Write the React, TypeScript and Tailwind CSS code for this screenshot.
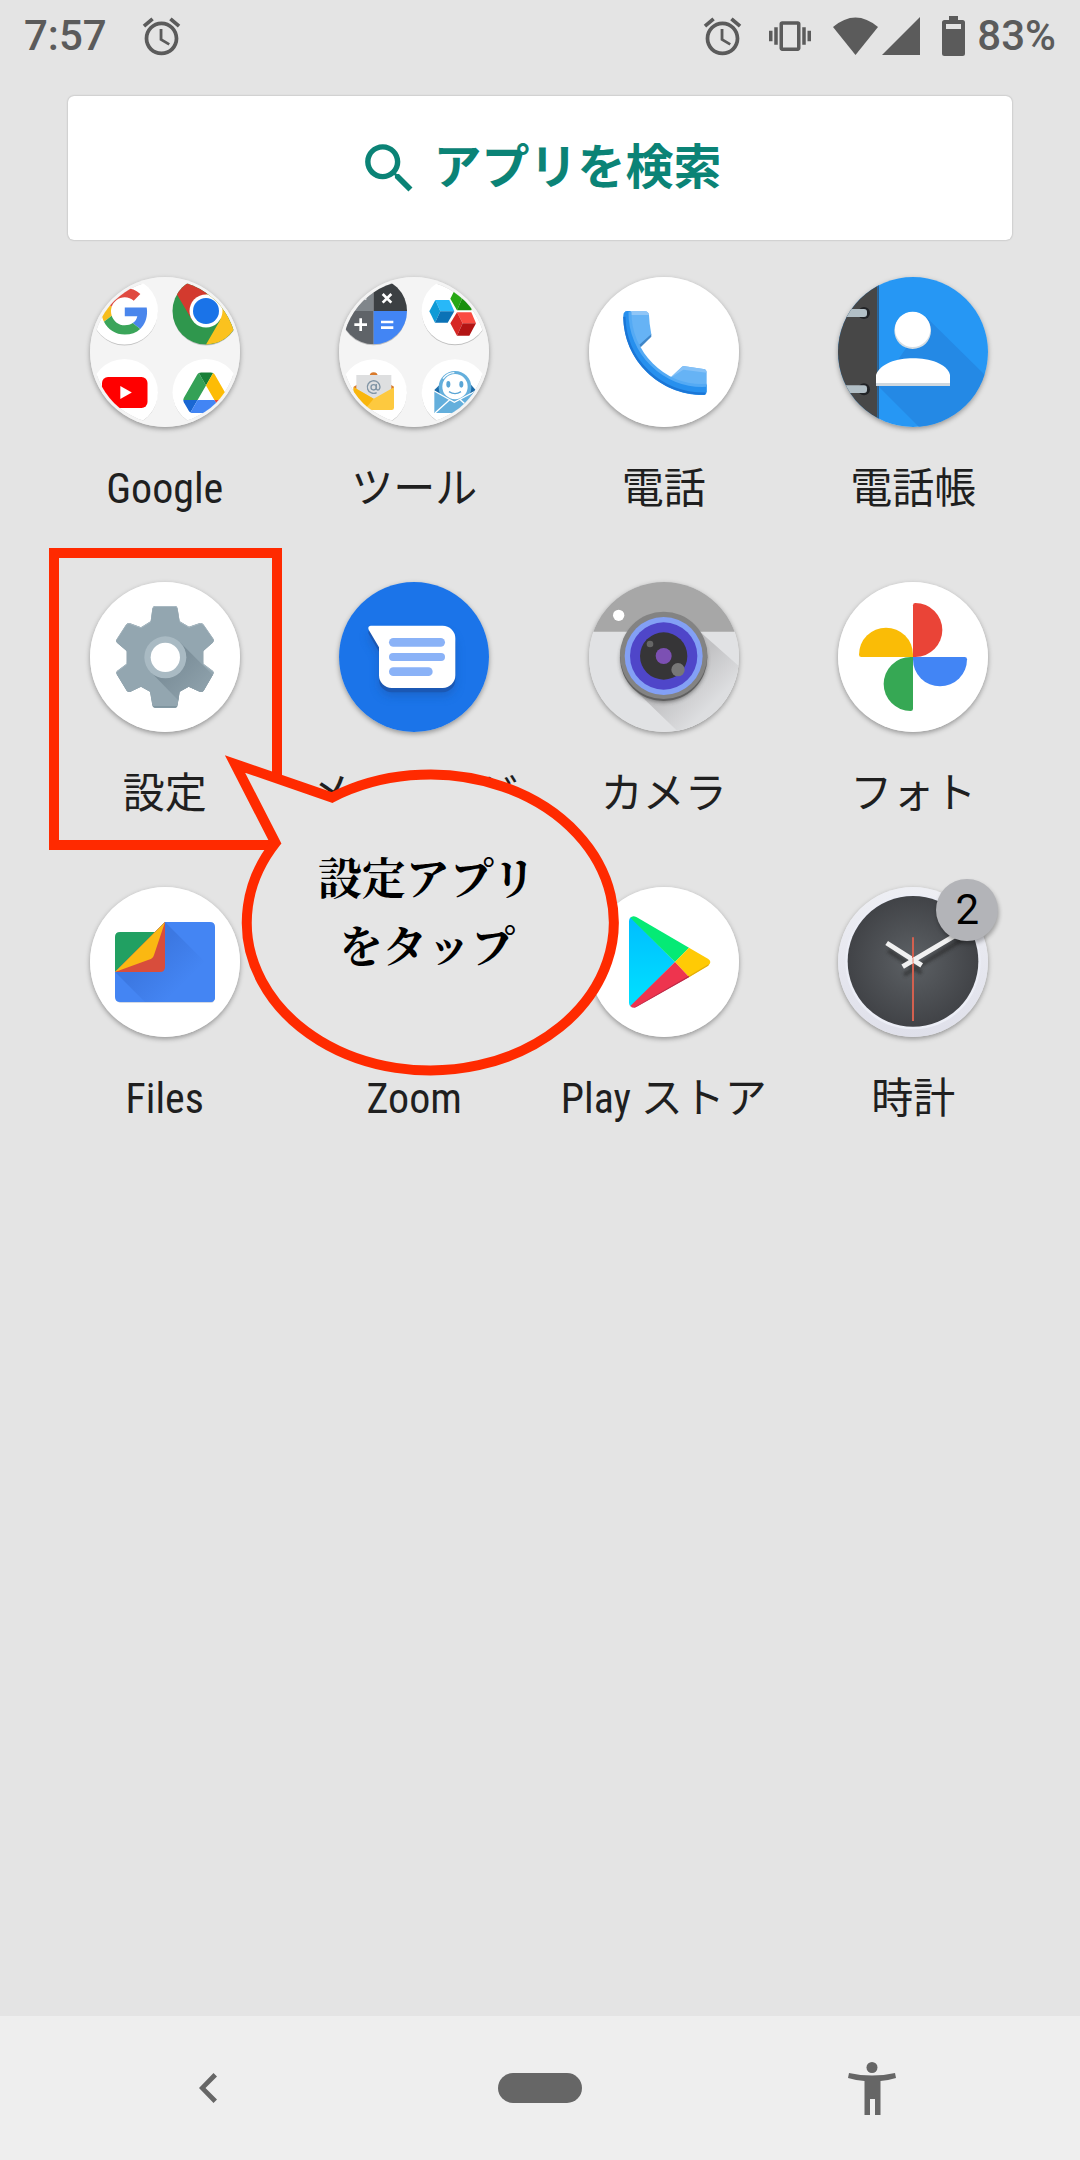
import type { ReactNode } from "react";

function AlarmIcon() {
  return (
    <svg viewBox="0 0 24 24" className="size-[45px] shrink-0" fill="currentColor" aria-hidden="true">
      <path d="M22 5.72l-4.6-3.86-1.29 1.53 4.6 3.86L22 5.72zM7.88 3.39L6.6 1.86 2 5.71l1.29 1.53 4.59-3.85zM12.5 8H11v6l4.75 2.85.75-1.23-4-2.37V8zM12 4c-4.97 0-9 4.03-9 9s4.02 9 9 9c4.97 0 9-4.03 9-9s-4.03-9-9-9zm0 16c-3.87 0-7-3.13-7-7s3.13-7 7-7 7 3.13 7 7-3.13 7-7 7z" />
    </svg>
  );
}

function StatusBar() {
  return (
    <header className="flex h-[72px] items-center justify-between px-6 text-[42px] leading-none font-medium text-[#5b5b5b]">
      <div className="flex items-center gap-8">
        <time>7:57</time>
        <AlarmIcon />
      </div>
      <div className="flex items-center">
        <AlarmIcon />
        <svg viewBox="0 0 24 24" className="ml-6 size-[42px]" fill="currentColor" aria-label="バイブレーション">
          <path d="M0 15h2V9H0v6zm3 2h2V7H3v10zm19-8v6h2V9h-2zm-3 8h2V7h-2v10zM16.500 3.500h-9C6.670 3.500 6 4.170 6 5v14c0 .83.67 1.500 1.500 1.500h9c.83 0 1.500-.67 1.500-1.500V5c0-.83-.67-1.500-1.500-1.500zM16 18.500H8v-13h8v13z" />
        </svg>
        <svg viewBox="0 0 45 38" className="ml-[22px] h-[38px] w-[45px]" fill="currentColor" aria-label="Wi-Fi">
          <path d="M0 10Q22.500-9 45 10L22.500 38z" />
        </svg>
        <svg viewBox="0 0 38 38" className="ml-1 h-[38px] w-[38px]" fill="currentColor" aria-label="電波">
          <path d="M38 0V38H0z" />
        </svg>
        <svg viewBox="0 0 23 40" className="ml-[22px] h-10 w-[23px]" fill="currentColor" aria-label="電池">
          <path fillRule="evenodd" d="M7 0h9v4h4.500q2.500 0 2.500 2.500v31q0 2.500-2.500 2.500h-18Q0 40 0 37.500v-31Q0 4 2.500 4H7zM4 8v5h15V8z" />
        </svg>
        <span className="ml-3">83%</span>
      </div>
    </header>
  );
}

function SearchBar() {
  return (
    <label className="mx-[68px] mt-6 flex h-36 items-center justify-center gap-3 rounded-md bg-white pl-1 text-[#0b8376] shadow-[0_0_2px_rgba(0,0,0,0.3)]">
      <svg viewBox="0 0 24 24" className="size-[65px] shrink-0" fill="currentColor" aria-hidden="true">
        <path d="M15.500 14h-.79l-.28-.27C15.410 12.590 16 11.110 16 9.500 16 5.910 13.090 3 9.500 3S3 5.910 3 9.500 5.910 16 9.500 16c1.610 0 3.090-.59 4.230-1.570l.27.28v.79l5 4.990L20.490 19l-4.990-5zm-6 0C7.010 14 5 11.990 5 9.500S7.010 5 9.500 5 14 7.010 14 9.500 11.990 14 9.500 14z" />
      </svg>
      <input
        type="text"
        aria-label="アプリを検索"
        placeholder="アプリを検索"
        className="h-[72px] w-[294px] bg-transparent text-[48px] font-bold outline-none placeholder:text-[#0b8376] placeholder:opacity-100"
      />
    </label>
  );
}

function GoogleFolder() {
  return (
    <svg viewBox="0 0 150 150" className="size-full" aria-hidden="true">
      <defs>
        <clipPath id="google-clip"><circle cx="75" cy="75" r="72" /></clipPath>
      </defs>
      <circle cx="75" cy="75" r="75" fill="#f4f4f4" />
      <g clipPath="url(#google-clip)">
        <g fill="#c4c4c4">
          <circle cx="34.500" cy="35.500" r="33" /><circle cx="116" cy="35.500" r="33" />
          <circle cx="34.500" cy="116.500" r="33" /><circle cx="116" cy="116.500" r="33" />
        </g>
        <g fill="#fff">
          <circle cx="34.500" cy="34" r="33.500" /><circle cx="34.500" cy="115.500" r="33.500" /><circle cx="116" cy="115.500" r="33.500" />
        </g>
        <g transform="translate(11.500 11) scale(.97)">
          <path fill="#e04a40" d="M24 9.500c3.540 0 6.710 1.220 9.210 3.600l6.850-6.850C35.900 2.380 30.470 0 24 0 14.620 0 6.510 5.380 2.560 13.220l7.980 6.190C12.430 13.720 17.740 9.500 24 9.500z" />
          <path fill="#4a86ec" d="M46.980 24.550c0-1.570-.15-3.090-.38-4.550H24v9.020h12.940c-.58 2.960-2.260 5.480-4.780 7.180l7.730 6c4.510-4.180 7.090-10.360 7.090-17.650z" />
          <path fill="#f7bd1d" d="M10.530 28.590c-.48-1.450-.76-2.990-.76-4.590s.27-3.140.76-4.590l-7.980-6.190C.92 16.460 0 20.120 0 24c0 3.880.92 7.540 2.560 10.780l7.970-6.190z" />
          <path fill="#3ba55a" d="M24 48c6.480 0 11.930-2.130 15.890-5.810l-7.730-6c-2.150 1.450-4.920 2.300-8.160 2.300-6.260 0-11.570-4.220-13.470-9.910l-7.980 6.190C6.510 42.620 14.620 48 24 48z" />
        </g>
        <circle cx="116" cy="34" r="33.500" fill="#2f974d" />
        <path fill="#d33a2e" d="M87 17.500L102 43 116 34V17.500h29A33.500 33.500 0 0 0 87 17.500z" />
        <path fill="#fbc21e" d="M145 17.500H116V34l14.500 8.500L116 67.500A33.500 33.500 0 0 0 145 17.500z" />
        <circle cx="116" cy="34" r="16.500" fill="#fff" />
        <circle cx="116" cy="34" r="13" fill="#1a73e8" />
        <rect x="12" y="100" width="45.500" height="31" rx="6" fill="#f00" />
        <path fill="#fff" d="M30.300 109v13l11.500-6.500z" />
        <g transform="translate(93.300 95.500) scale(.52)">
          <path fill="#1967d2" d="m6.600 66.850 3.850 6.650c.8 1.400 1.950 2.500 3.300 3.300l13.750-23.800h-27.500c0 1.550.4 3.100 1.200 4.500z" />
          <path fill="#34a156" d="m43.650 25-13.750-23.800c-1.350.8-2.500 1.900-3.300 3.300l-25.400 44a9.060 9.060 0 0 0-1.200 4.500h27.500z" />
          <path fill="#ea4335" d="m73.550 76.800c1.350-.8 2.500-1.900 3.300-3.300l1.600-2.750 7.650-13.250c.8-1.400 1.200-2.950 1.200-4.500h-27.500l5.850 11.500z" />
          <path fill="#188038" d="m43.650 25 13.750-23.800c-1.350-.8-2.900-1.200-4.500-1.200h-18.500c-1.600 0-3.150.45-4.500 1.200z" />
          <path fill="#4285f4" d="m59.800 53h-32.300l-13.750 23.800c1.350.8 2.900 1.200 4.500 1.200h50.800c1.600 0 3.150-.45 4.500-1.200z" />
          <path fill="#fdbc05" d="m73.400 26.500-12.700-22c-.8-1.400-1.950-2.500-3.300-3.300l-13.750 23.800 16.150 28h27.450c0-1.550-.4-3.100-1.200-4.500z" />
        </g>
      </g>
    </svg>
  );
}

function ToolsFolder() {
  return (
    <svg viewBox="86 51 450 450" className="size-full" aria-hidden="true">
      <defs>
        <clipPath id="tools-clip"><circle cx="311" cy="276" r="216" /></clipPath>
        <clipPath id="calc-clip"><circle cx="190" cy="153" r="100" /></clipPath>
      </defs>
      <circle cx="311" cy="276" r="225" fill="#f4f4f4" />
      <g clipPath="url(#tools-clip)">
        <g fill="#c0c0c0">
          <circle cx="190" cy="157" r="99" /><circle cx="434" cy="157" r="99" /><circle cx="190" cy="401" r="99" /><circle cx="434" cy="401" r="99" />
        </g>
        <g fill="#fff">
          <circle cx="434" cy="153" r="100" /><circle cx="190" cy="398" r="100" /><circle cx="434" cy="398" r="100" />
        </g>
        <g clipPath="url(#calc-clip)">
          <path fill="#80868b" d="M90 53h100v100H90z" />
          <path fill="#3c4043" d="M190 53h100v100H190z" />
          <path fill="#5f6368" d="M90 153h100v100H90z" />
          <path fill="#4285f4" d="M190 153h100v100H190z" />
        </g>
        <path stroke="#fff" strokeWidth="8" d="M217 102l26 26m0-26l-26 26M132 194h38m-19-19v38M212 186h37M212 203h37M134 115h34" />
        <path fill="#28b8f8" d="M375 120h42l15 34h-42z" />
        <path fill="#109bd6" d="M375 120l15 34-16 34-17-34z" />
        <path fill="#0b72b6" d="M390 154h42l-20 34h-38z" />
        <path fill="#39bb20" d="M436 84h42l17 32h-40z" />
        <path fill="#27a815" d="M436 84l19 32-15 35-20-35z" />
        <path fill="#188f0c" d="M455 116h40l-12 35h-43z" />
        <path fill="#fa4c42" d="M440 157h43l14 33h-40z" />
        <path fill="#d72724" d="M440 157l17 33-17 37-20-37z" />
        <path fill="#b31414" d="M457 190h40l-20 37h-37z" />
        <path fill="#d97a2b" d="M130 380l14-8h94l13 8v12H130z" />
        <circle cx="190" cy="349" r="12" fill="#d97a2b" />
        <path fill="#dedfe0" d="M138 345h105v45l-53 30-52-30z" />
        <circle cx="190" cy="382" r="8" fill="none" stroke="#8195a5" strokeWidth="4" />
        <path fill="none" stroke="#8195a5" strokeWidth="4" d="M198 372v14q2 6 8 3 3-4 3-8a19 19 0 1 0-10 17" />
        <path fill="#fdc93f" d="M130 382l60 34 61-34v61q0 7-7 7H137q-7 0-7-7z" />
        <path fill="#f9b60d" d="M130 382l60 34-28 34h-25q-7 0-7-7z" />
        <path fill="#1c6ba8" d="M372 390l16-16h94l14 16-10 14H382z" />
        <circle cx="434" cy="382" r="49" fill="#64afdc" />
        <circle cx="434" cy="380" r="38" fill="#fff" />
        <path fill="none" stroke="#fff" strokeWidth="4" d="M398 356q14-18 34-18" />
        <g fill="#5aa5d5"><ellipse cx="414" cy="373" rx="6" ry="10" /><ellipse cx="453" cy="373" rx="6" ry="10" /></g>
        <path fill="none" stroke="#5aa5d5" strokeWidth="4" d="M416 395q18 12 36 0" />
        <path fill="#64afdc" d="M372 393l60 34 64-34v66H372z" />
        <path fill="none" stroke="#fff" strokeWidth="4" d="M372 393l60 34 64-34M374 459l44-40M450 419l44 40" />
      </g>
    </svg>
  );
}

function PhoneIcon() {
  return (
    <svg viewBox="87 51 450 450" className="size-full" aria-hidden="true">
      <circle cx="312" cy="276" r="225" fill="#fff" />
      <path fill="#66b3f5" d="M196 154h58q12 1 13 12l2 25 5 32-34 38-44-50z" />
      <path fill="#90c6f7" d="M200 153h54q12 1 13 12H196z" />
      <path fill="#3f86c8" d="M274 222v8l-32 32-4-8z" />
      <path fill="#66b3f5" d="M330 354l36-34q4-3 9-1l55 8q10 1 10 11v58l-60 4z" />
      <path fill="#85c1f7" d="M330 354l36-34q4-3 9-1l55 8q10 1 10 11l-70-9z" />
      <path fill="#2790ee" d="M203 153q-13 0-13 14C190 302 300 405 430 405q10-1 10-10v-20C310 385 208 270 212 154z" />
      <path fill="none" stroke="#54aaf4" strokeWidth="9" d="M210 156C208 275 310 384 440 376" />
      <path fill="none" stroke="#1b76d6" strokeWidth="7" d="M193 170C196 300 300 402 436 401" />
    </svg>
  );
}

function ContactsIcon() {
  return (
    <svg viewBox="834 51 450 450" className="size-full" aria-hidden="true">
      <defs><clipPath id="contacts-clip"><circle cx="1059" cy="276" r="225" /></clipPath></defs>
      <g clipPath="url(#contacts-clip)">
        <path fill="#2697f4" d="M834 51h450v450H834z" />
        <path fill="#2489e5" d="M1099 172l185 182v147H1077L957 381l80-115z" />
        <path fill="#474747" d="M834 51h118v450H834z" />
        <path fill="#2b5f8f" d="M952 51h5v450h-5z" />
        <g fill="#212326"><circle cx="912" cy="159" r="18" /><circle cx="912" cy="388" r="18" /></g>
        <g fill="#b2bfc6"><rect x="820" y="147" width="101" height="24" rx="9" /><rect x="820" y="376" width="101" height="23" rx="9" /></g>
        <circle cx="1058" cy="212" r="55" fill="#d5dde3" />
        <circle cx="1058" cy="208" r="53" fill="#fff" />
        <path fill="#cfd8df" d="M948 360h222v18H948z" />
        <path fill="#fff" d="M948 369v-24c12-34 62-50 111-50s103 16 111 50v24z" />
      </g>
    </svg>
  );
}

const gear =
  "M337 206Q338 198 345 198H406Q412 198 413 206L419 244 447 260 480 249Q487 248 491 254L521 298Q523 304 518 308L490 333V371L519 393Q523 397 520 402L491 452Q487 457 481 456L446 440 419 455 413 495Q412 503 406 503H345Q338 503 337 496L330 455 303 440 270 456Q264 457 260 452L230 403Q227 397 231 393L260 371V333L231 308Q227 304 229 299L258 254Q262 248 268 249L303 262 332 244Z";

function SettingsIcon() {
  return (
    <svg viewBox="150 126 450 450" className="size-full" aria-hidden="true">
      <defs>
        <clipPath id="gear-clip"><path d={gear} /></clipPath>
        <linearGradient id="gear-shadow" x1="0" y1="0" x2="1" y2="1">
          <stop offset="0.200" stopColor="#768994" />
          <stop offset="0.900" stopColor="#93a6b0" />
        </linearGradient>
      </defs>
      <circle cx="375" cy="351" r="225" fill="#fff" />
      <path d={gear} fill="#788f9a" />
      <g clipPath="url(#gear-clip)">
        <path d={gear} fill="#a9b9c2" transform="translate(0 -6)" />
        <path d={gear} fill="#93a6b0" transform="translate(0 3)" />
        <path d="M420 307l110 110v90H440L330 394z" fill="url(#gear-shadow)" />
        <path d="M330 499h90v5h-90z" fill="#788f9a" />
      </g>
      <circle cx="376" cy="352" r="63" fill="#a9bac3" />
      <circle cx="376" cy="352" r="44" fill="#fff" />
    </svg>
  );
}

const speech =
  "M212 197H428a38 38 0 0 1 38 38V346a38 38 0 0 1-38 38H275a38 38 0 0 1-38-38V262L206 209Q202 198 212 197z";

function MessagesIcon() {
  return (
    <svg viewBox="117 66 450 450" className="size-full" aria-hidden="true">
      <defs><filter id="speech-blur" x="-20%" y="-20%" width="140%" height="150%"><feGaussianBlur stdDeviation="14" /></filter></defs>
      <circle cx="342" cy="291" r="225" fill="#1b74e9" />
      <path d={speech} fill="#1c57ab" opacity="0.500" filter="url(#speech-blur)" transform="translate(0 24)" />
      <path d={speech} fill="#1b58b4" transform="translate(0 13)" />
      <path d={speech} fill="#fff" />
      <g fill="#8ab2f7">
        <rect x="267" y="234" width="168" height="26" rx="13" />
        <rect x="267" y="279" width="168" height="24" rx="12" />
        <rect x="267" y="322" width="131" height="26" rx="13" />
      </g>
    </svg>
  );
}

function CameraIcon() {
  return (
    <svg viewBox="87 66 450 450" className="size-full" aria-hidden="true">
      <defs>
        <clipPath id="camera-clip"><circle cx="312" cy="291" r="225" /></clipPath>
        <linearGradient id="camera-shadow" gradientUnits="userSpaceOnUse" x1="340" y1="330" x2="450" y2="440">
          <stop offset="0.200" stopColor="#c2c2c4" />
          <stop offset="1" stopColor="#dddee0" />
        </linearGradient>
        <filter id="lens-blur" x="-20%" y="-20%" width="140%" height="140%"><feGaussianBlur stdDeviation="6" /></filter>
      </defs>
      <g clipPath="url(#camera-clip)">
        <path fill="#e1e2e4" d="M87 66h450v450H87z" />
        <path fill="url(#camera-shadow)" d="M420 215l117 104v197H355L230 395z" />
        <path fill="#a7a7a7" d="M87 66h450v149H87z" />
        <circle cx="176" cy="166" r="17" fill="#fff" />
        <circle cx="311" cy="298" r="129" fill="#333" opacity="0.600" filter="url(#lens-blur)" />
        <circle cx="311" cy="292" r="131" fill="#5f5f5f" />
        <circle cx="311" cy="286" r="131" fill="#838383" />
        <circle cx="311" cy="288" r="117" fill="#83a0f5" />
        <circle cx="311" cy="288" r="101" fill="#4f46c9" />
        <circle cx="311" cy="288" r="71" fill="#363537" />
        <circle cx="311" cy="288" r="24" fill="#7c50b3" />
        <circle cx="270" cy="252" r="10" fill="#666" />
        <circle cx="354" cy="329" r="20" fill="#777" />
      </g>
    </svg>
  );
}

function PhotosIcon() {
  const blade = "M1059 291V136q0-7 7-7a81 81 0 0 1 0 162z";
  return (
    <svg viewBox="834 66 450 450" className="size-full" aria-hidden="true">
      <circle cx="1059" cy="291" r="225" fill="#fff" />
      <path d={blade} fill="#ea4437" />
      <path d={blade} fill="#4285f5" transform="rotate(90 1059 291)" />
      <path d={blade} fill="#36a854" transform="rotate(180 1059 291)" />
      <path d={blade} fill="#fabc06" transform="rotate(270 1059 291)" />
    </svg>
  );
}

function FilesIcon() {
  return (
    <svg viewBox="0 0 150 150" className="size-full" aria-hidden="true">
      <defs>
        <linearGradient id="files-shade" gradientUnits="userSpaceOnUse" x1="62" y1="68" x2="92" y2="98">
          <stop offset="0" stopColor="#3c78e2" />
          <stop offset="1" stopColor="#4485f3" />
        </linearGradient>
      </defs>
      <circle cx="75" cy="75" r="75" fill="#fff" />
      <path fill="#d3d9e4" d="M27 86l98-46v71q0 5-5 5H31q-4 0-4-5z" />
      <path fill="#4485f3" d="M75 35h45q5 0 5 5v70q0 5-5 5H30q-5 0-5-5V85z" />
      <path fill="url(#files-shade)" d="M75 35l50 50v25q0 5-5 5H55L25 85z" />
      <path fill="#21a062" d="M30 45h36L25 85V50q0-5 5-5z" />
      <path fill="#d84d3c" d="M75 35v45q0 5-5 5H25z" />
      <path fill="#fbb812" d="M75 35L25 85l33-12q5-1 6-5z" />
    </svg>
  );
}

function ZoomIcon() {
  return (
    <svg viewBox="0 0 150 150" className="size-full" aria-hidden="true">
      <circle cx="75" cy="75" r="75" fill="#fff" />
      <circle cx="75" cy="75" r="62" fill="#4a8cff" />
      <path fill="#fff" d="M38 56h42q10 0 10 10v29H48q-10 0-10-10zM94 68l19-13v40L94 82z" />
    </svg>
  );
}

function PlayIcon() {
  return (
    <svg viewBox="87 81 450 450" className="size-full" aria-hidden="true">
      <defs>
        <linearGradient id="play-blue" x1="0" y1="0" x2="0" y2="1">
          <stop offset="0" stopColor="#00bdff" />
          <stop offset="1" stopColor="#00e2ff" />
        </linearGradient>
      </defs>
      <circle cx="312" cy="306" r="225" fill="#fff" />
      <path fill="url(#play-blue)" d="M207 183q0-8 6-11l132 134-132 134q-6-3-6-11z" />
      <path fill="#05ea75" d="M211 173q7-8 18-2l158 92-42 43z" />
      <path fill="#ffca05" d="M387 263l58 34q12 9 0 19l-58 35-42-45z" />
      <path fill="#ee344e" d="M345 306l42 45-158 89q-10 6-18-2z" />
      <path fill="#bb2a48" d="M213 440q8 5 16-1l158-92v5l-158 89q-9 5-16-1z" />
      <path fill="#e3ad0a" d="M387 347l60-35-2 5-58 35z" />
    </svg>
  );
}

function ClockIcon() {
  return (
    <svg viewBox="834 81 450 450" className="size-full" aria-hidden="true">
      <defs>
        <radialGradient id="clock-face">
          <stop offset="0" stopColor="#5d6165" />
          <stop offset="1" stopColor="#414347" />
        </radialGradient>
        <linearGradient id="clock-rim" x1="0" y1="0" x2="0" y2="1">
          <stop offset="0" stopColor="#eeeff4" />
          <stop offset="1" stopColor="#dfe0ea" />
        </linearGradient>
        <filter id="hand-blur" x="-20%" y="-20%" width="140%" height="140%"><feGaussianBlur stdDeviation="5" /></filter>
      </defs>
      <circle cx="1059" cy="306" r="225" fill="url(#clock-rim)" />
      <circle cx="1059" cy="305" r="203" fill="#eceef6" />
      <circle cx="1059" cy="304" r="196" fill="url(#clock-face)" />
      <path stroke="#222" strokeWidth="14" opacity="0.500" filter="url(#hand-blur)" d="M985 272l100 67M1032 345l178-108" />
      <path stroke="#f1f1f1" strokeWidth="15" d="M980 249l105 67" />
      <path stroke="#d3604f" strokeWidth="6" d="M1059 232v251" />
      <path stroke="#f1f1f1" strokeWidth="15" d="M1028 320l182-108" />
      <path stroke="#f0b8ae" strokeWidth="6" d="M1059 295v13" />
    </svg>
  );
}

const apps: { name: string; icon: ReactNode; badge?: string; highlighted?: boolean }[] = [
  { name: "Google", icon: <GoogleFolder /> },
  { name: "ツール", icon: <ToolsFolder /> },
  { name: "電話", icon: <PhoneIcon /> },
  { name: "電話帳", icon: <ContactsIcon /> },
  { name: "設定", icon: <SettingsIcon />, highlighted: true },
  { name: "メッセージ", icon: <MessagesIcon /> },
  { name: "カメラ", icon: <CameraIcon /> },
  { name: "フォト", icon: <PhotosIcon /> },
  { name: "Files", icon: <FilesIcon /> },
  { name: "Zoom", icon: <ZoomIcon /> },
  { name: "Play ストア", icon: <PlayIcon /> },
  { name: "時計", icon: <ClockIcon />, badge: "2" },
];

function TapHint() {
  return (
    <div className="pointer-events-none absolute inset-0 z-10">
      <div className="absolute -top-[34px] right-2 -bottom-[26px] left-[9px] border-10 border-[#ff2a00]" />
      <div className="absolute top-[168px] left-[180px] h-[332px] w-[402px]">
        <svg viewBox="220 750 402 332" className="size-full" aria-hidden="true">
          <path
            fill="#e5e5e5"
            stroke="#ff2a00"
            strokeWidth="10"
            strokeMiterlimit="10"
            d="M332 797.500L235 764 275.500 843A183.500 148 0 1 0 332 797.500z"
          />
        </svg>
        <p className="absolute inset-x-0 top-[92px] pl-3 text-center font-['Noto_Serif_CJK_JP','Noto_Serif_JP','Noto_Sans_CJK_JP',serif] text-[44px] leading-[68px] font-bold text-black">
          設定アプリ
          <br />
          をタップ
        </p>
      </div>
    </div>
  );
}

function AppGrid() {
  return (
    <ul className="mt-[37px] grid grid-cols-4 gap-y-[63px] pr-[42px] pl-10">
      {apps.map((app) => (
        <li key={app.name} className="relative flex justify-center">
          <button type="button" className="flex flex-col items-center gap-8">
            <span className="relative block size-[150px] rounded-full shadow-[0_2px_5px_rgba(0,0,0,0.35)]">
              {app.icon}
              {app.badge && (
                <span className="absolute -top-2 -right-[10px] flex size-[62px] items-center justify-center rounded-full bg-[#b3b4b8] text-[42px] leading-none text-black shadow-[1px_3px_4px_rgba(0,0,0,0.3)]">
                  {app.badge}
                </span>
              )}
            </span>
            <span className="font-['Roboto_Condensed','Liberation_Sans_Narrow',Roboto,'Noto_Sans_CJK_JP',sans-serif] text-[42px] leading-[60px] whitespace-nowrap text-[#1f1f1f]">
              {app.name}
            </span>
          </button>
          {app.highlighted && <TapHint />}
        </li>
      ))}
    </ul>
  );
}

function NavigationBar() {
  return (
    <nav className="mt-auto grid h-36 grid-cols-3 place-items-center bg-[#eee] px-[42px] text-[#666]">
      <button type="button" aria-label="戻る" className="flex p-4">
        <svg viewBox="0 0 18 30" className="h-[30px] w-[18px]" fill="currentColor">
          <path d="M18 3.500L14.500 0 0 15l14.500 15 3.500-3.500L6.500 15z" />
        </svg>
      </button>
      <button type="button" aria-label="ホーム" className="h-[30px] w-[84px] rounded-full bg-[#666]" />
      <button type="button" aria-label="ユーザー補助" className="flex p-4">
        <svg viewBox="0 0 48 53" className="h-[53px] w-12" fill="currentColor">
          <circle cx="24" cy="5.500" r="5.500" />
          <path d="M1 11Q24 16 47 11L48 16Q40 18.300 32.500 19V53H27V37H22V53H16.500V19Q8 18.300 0 16z" />
        </svg>
      </button>
    </nav>
  );
}

export default function App() {
  return (
    <div className="flex min-h-screen flex-col bg-[#e4e4e4] font-[Roboto,'Noto_Sans_CJK_JP',sans-serif]" lang="ja">
      <StatusBar />
      <main>
        <SearchBar />
        <AppGrid />
      </main>
      <NavigationBar />
    </div>
  );
}
